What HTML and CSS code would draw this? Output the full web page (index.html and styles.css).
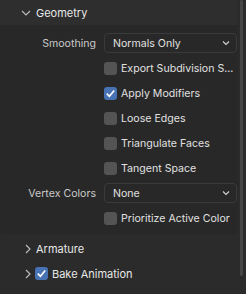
FILE: index.html
```html
<!DOCTYPE html>
<html>
<head>
<meta charset="utf-8">
<link rel="stylesheet" href="styles.css">
</head>
<body>
<div class="editor">
  <div class="panel">
    <div class="panel-header">
      <svg class="chev" width="10" height="8" viewBox="0 0 10 8"><path d="M1 2 L5 6 L9 2" fill="none" stroke="#b8b8b8" stroke-width="1.2"/></svg>
      <span class="title">Geometry</span>
    </div>
    <div class="panel-body">
      <div class="row">
        <span class="label">Smoothing</span>
        <div class="select"><span>Normals Only</span><svg width="8" height="6" viewBox="0 0 8 6"><path d="M1 1.5 L4 4.5 L7 1.5" fill="none" stroke="#d0d0d0" stroke-width="1.2"/></svg></div>
      </div>
      <div class="row">
        <span class="label"></span>
        <label class="check"><span class="box"></span><span class="ctext">Export Subdivision S...</span></label>
      </div>
      <div class="row">
        <span class="label"></span>
        <label class="check"><span class="box on"><svg width="14" height="14" viewBox="0 0 14 14"><path d="M3 7.2 L5.8 10 L11 3.8" fill="none" stroke="#fff" stroke-width="1.8"/></svg></span><span class="ctext">Apply Modifiers</span></label>
      </div>
      <div class="row">
        <span class="label"></span>
        <label class="check"><span class="box"></span><span class="ctext">Loose Edges</span></label>
      </div>
      <div class="row">
        <span class="label"></span>
        <label class="check"><span class="box"></span><span class="ctext">Triangulate Faces</span></label>
      </div>
      <div class="row">
        <span class="label"></span>
        <label class="check"><span class="box"></span><span class="ctext">Tangent Space</span></label>
      </div>
      <div class="row">
        <span class="label">Vertex Colors</span>
        <div class="select"><span>None</span><svg width="8" height="6" viewBox="0 0 8 6"><path d="M1 1.5 L4 4.5 L7 1.5" fill="none" stroke="#d0d0d0" stroke-width="1.2"/></svg></div>
      </div>
      <div class="row">
        <span class="label"></span>
        <label class="check"><span class="box"></span><span class="ctext">Prioritize Active Color</span></label>
      </div>
    </div>
  </div>
  <div class="sub-header">
    <svg class="chev-r" width="8" height="10" viewBox="0 0 8 10"><path d="M2 1 L6 5 L2 9" fill="none" stroke="#b8b8b8" stroke-width="1.2"/></svg>
    <span class="title">Armature</span>
  </div>
  <div class="sub-header">
    <svg class="chev-r" width="8" height="10" viewBox="0 0 8 10"><path d="M2 1 L6 5 L2 9" fill="none" stroke="#b8b8b8" stroke-width="1.2"/></svg>
    <span class="box on"><svg width="14" height="14" viewBox="0 0 14 14"><path d="M3 7.2 L5.8 10 L11 3.8" fill="none" stroke="#fff" stroke-width="1.8"/></svg></span>
    <span class="title bake">Bake Animation</span>
  </div>
  <div class="scrollbar"></div>
</div>
</body>
</html>
```

FILE: styles.css
```css
html, body {
  margin: 0;
  padding: 0;
  background: #2b2b2b;
}
.editor {
  position: relative;
  width: 246px;
  height: 294px;
  overflow: hidden;
  font-family: Inter, "DejaVu Sans", sans-serif;
  font-size: 10.6px;
  color: #dcdcdc;
}
.panel {
  width: 238px;
  border-radius: 0 0 4px 4px;
  background: #282828;
  overflow: hidden;
}
.panel-header {
  height: 25px;
  background: #2e2e2e;
  display: flex;
  align-items: center;
  padding-left: 21px;
}
.chev { margin-right: 5px; margin-top: 1px; }
.title {
  font-size: 11px;
  color: #e8e8e8;
}
.panel-body {
  padding: 8px 0 6px 0;
  display: flex;
  flex-direction: column;
  gap: 5px;
}
.row {
  height: 20px;
  display: grid;
  grid-template-columns: 96px 133px;
  column-gap: 8px;
  align-items: center;
}
.label {
  text-align: right;
  color: #c8c8c8;
}
.select {
  height: 18px;
  border: 1px solid #3a3a3a;
  border-radius: 4px;
  background: #282828;
  display: flex;
  align-items: center;
  justify-content: space-between;
  padding: 0 6px 0 8px;
  color: #e0e0e0;
}
.check {
  display: flex;
  align-items: center;
}
.box {
  width: 13px;
  height: 13px;
  border-radius: 3px;
  background: #545454;
  display: inline-flex;
  align-items: center;
  justify-content: center;
  flex: none;
}
.box svg { width: 13px; height: 13px; }
.box.on { background: #4772b3; }
.ctext {
  margin-left: 4px;
  white-space: nowrap;
  color: #e0e0e0;
}
.sub-header {
  height: 25px;
  display: flex;
  align-items: center;
  padding-left: 24px;
}
.panel + .sub-header { margin-top: 2px; }
.chev-r { margin-right: 4px; }
.sub-header .box { margin-left: -1px; margin-right: 4px; }
.scrollbar {
  position: absolute;
  left: 240px;
  top: 0;
  width: 3px;
  height: 276px;
  border-radius: 2px;
  background: #454545;
}
```
